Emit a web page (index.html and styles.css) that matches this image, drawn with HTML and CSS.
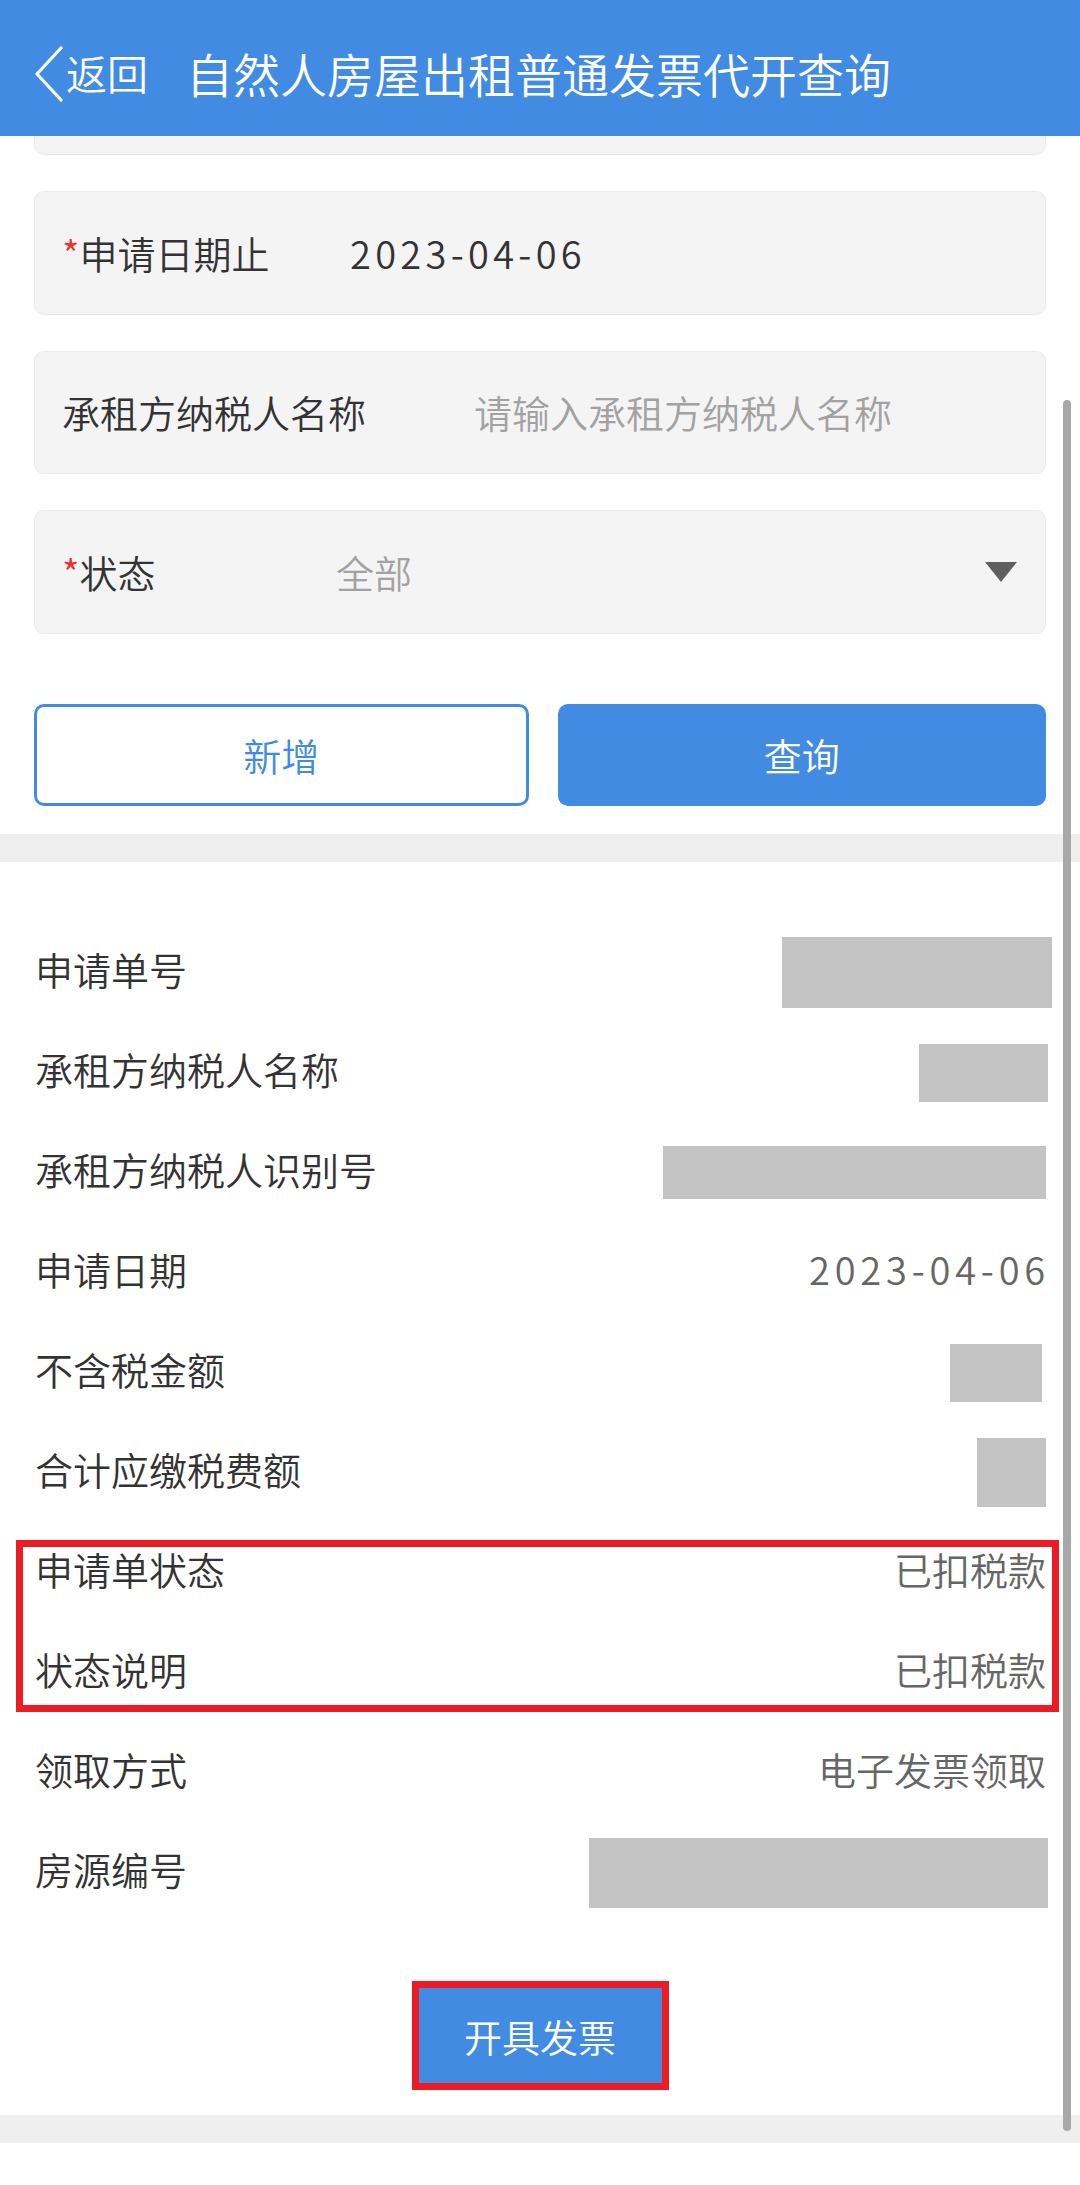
FILE: index.html
```html
<!DOCTYPE html>
<html lang="zh-CN">
<head>
<meta charset="utf-8">
<title>自然人房屋出租普通发票代开查询</title>
<link rel="stylesheet" href="styles.css">
</head>
<body>
<div class="page">
  <header class="topbar">
    <a class="back">
      <svg class="back-icon" viewBox="0 0 30 56" width="30" height="56"><polyline points="27,2 3,28 27,54" fill="none" stroke="#fff" stroke-width="3.2" stroke-linecap="round" stroke-linejoin="round"/></svg>
      <span class="back-text">返回</span>
    </a>
    <h1 class="title">自然人房屋出租普通发票代开查询</h1>
  </header>

  <section class="form">
    <div class="field field--cut"></div>
    <div class="field">
      <span class="label label--date"><i class="req">*</i>申请日期止</span>
      <span class="value date">2023-04-06</span>
    </div>
    <div class="field">
      <span class="label label--name">承租方纳税人名称</span>
      <span class="placeholder">请输入承租方纳税人名称</span>
    </div>
    <div class="field">
      <span class="label label--status"><i class="req">*</i>状态</span>
      <span class="placeholder">全部</span>
      <span class="caret"></span>
    </div>
  </section>

  <div class="actions">
    <button class="btn btn--outline">新增</button>
    <button class="btn btn--primary">查询</button>
  </div>

  <div class="band"></div>

  <section class="detail">
    <div class="row"><span class="row-label">申请单号</span><span class="mask" style="width:270px;height:71px;margin-right:-6px"></span></div>
    <div class="row"><span class="row-label">承租方纳税人名称</span><span class="mask" style="width:129px;height:58px;margin-right:-2px"></span></div>
    <div class="row"><span class="row-label">承租方纳税人识别号</span><span class="mask" style="width:383px;height:53px"></span></div>
    <div class="row"><span class="row-label">申请日期</span><span class="row-value date">2023-04-06</span></div>
    <div class="row"><span class="row-label">不含税金额</span><span class="mask" style="width:92px;height:58px;margin-right:4px"></span></div>
    <div class="row"><span class="row-label">合计应缴税费额</span><span class="mask" style="width:69px;height:69px"></span></div>
    <div class="row-group">
      <div class="row"><span class="row-label">申请单状态</span><span class="row-value">已扣税款</span></div>
      <div class="row"><span class="row-label">状态说明</span><span class="row-value">已扣税款</span></div>
      <div class="highlight"></div>
    </div>
    <div class="row"><span class="row-label">领取方式</span><span class="row-value">电子发票领取</span></div>
    <div class="row"><span class="row-label">房源编号</span><span class="mask" style="width:459px;height:70px;margin-right:-2px"></span></div>
    <div class="issue-wrap">
      <button class="issue-btn">开具发票</button>
    </div>
  </section>

  <div class="band band--bottom"></div>

  <div class="scroll-indicator"></div>
</div>
</body>
</html>
```

FILE: styles.css
```css
* {
  box-sizing: border-box;
  margin: 0;
  padding: 0;
}

html,
body {
  background: #fff;
}

body {
  width: 1080px;
  font-family: "Noto Sans CJK SC", "Noto Sans", sans-serif;
  font-weight: 350;
  color: #333;
}

.page {
  position: relative;
  width: 1080px;
  min-height: 2185px;
}

/* header */
.topbar {
  height: 136px;
  background: #428be2;
  color: #fff;
  display: flex;
  align-items: center;
  padding: 8px 0 0 34px;
}

.back {
  display: flex;
  align-items: center;
  color: #fff;
  text-decoration: none;
}

.back-icon {
  display: block;
  width: 30px;
  height: 56px;
  margin-top: 4px;
}

.back-text {
  font-size: 41px;
  line-height: 1;
  margin-left: 2px;
}

.title {
  font-size: 47px;
  font-weight: 350;
  line-height: 1;
  margin-left: 38px;
}

/* search form */
.form {
  display: flex;
  flex-direction: column;
  gap: 36px;
  padding: 0 34px;
}

.field {
  height: 123.5px;
  background: #f4f4f4;
  border: 1px solid #ebebeb;
  border-radius: 10px;
  display: flex;
  align-items: center;
  padding: 0 28px 0 27px;
  font-size: 38px;
  line-height: 1;
}

.field--cut {
  height: 19px;
  border-top: 0;
  border-radius: 0 0 10px 10px;
}

.label {
  flex: none;
  color: #333;
}

.label--date {
  width: 288px;
}

.label--name {
  width: 412px;
}

.label--status {
  width: 274px;
}

.req {
  font-style: normal;
  color: #e8302c;
}

.value {
  color: #333;
}

.placeholder {
  color: #a2a2a2;
}

.date {
  letter-spacing: 4.3px;
}

.caret {
  margin-left: auto;
  width: 0;
  height: 0;
  border-left: 16.5px solid transparent;
  border-right: 16.5px solid transparent;
  border-top: 20px solid #5f5f5f;
}

/* buttons */
.actions {
  display: flex;
  gap: 29px;
  padding: 0 34px;
  margin-top: 70px;
}

.btn {
  flex: 1;
  height: 102px;
  border-radius: 10px;
  font-family: inherit;
  font-weight: 350;
  font-size: 38px;
  display: flex;
  align-items: center;
  justify-content: center;
}

.btn--outline {
  border: 3px solid #428be2;
  background: #fff;
  color: #428be2;
}

.btn--primary {
  border: 0;
  background: #428be2;
  color: #fff;
}

.band {
  height: 28px;
  background: #efefef;
  margin-top: 28px;
}

/* detail list */
.detail {
  padding-top: 61px;
}

.row {
  height: 100px;
  display: flex;
  align-items: center;
  justify-content: space-between;
  padding: 0 34px 0 35px;
  font-size: 38px;
  line-height: 1;
}

.row-label,
.row-value {
  display: block;
  padding-bottom: 8px;
}

.row-label {
  color: #333;
}

.row-value {
  color: #666;
}

.row-value.date {
  letter-spacing: 4.8px;
  margin-right: -4px;
}

.mask {
  display: block;
  background: #c3c3c3;
}

.row-group {
  position: relative;
}

.highlight {
  position: absolute;
  top: 17px;
  left: 16px;
  width: 1043px;
  height: 172px;
  border: 7px solid #ed1c24;
  pointer-events: none;
}

.issue-wrap {
  display: flex;
  justify-content: center;
  padding-top: 65px;
}

.issue-btn {
  width: 243px;
  height: 95px;
  border: 0;
  background: #428be2;
  color: #fff;
  font-family: inherit;
  font-weight: 350;
  font-size: 38px;
  outline: 7px solid #ed1c24;
}

.band--bottom {
  margin-top: 32px;
}

.scroll-indicator {
  position: absolute;
  top: 400px;
  left: 1063px;
  width: 8px;
  height: 1731px;
  border-radius: 4px;
  background: #a8a8a8;
}
```
